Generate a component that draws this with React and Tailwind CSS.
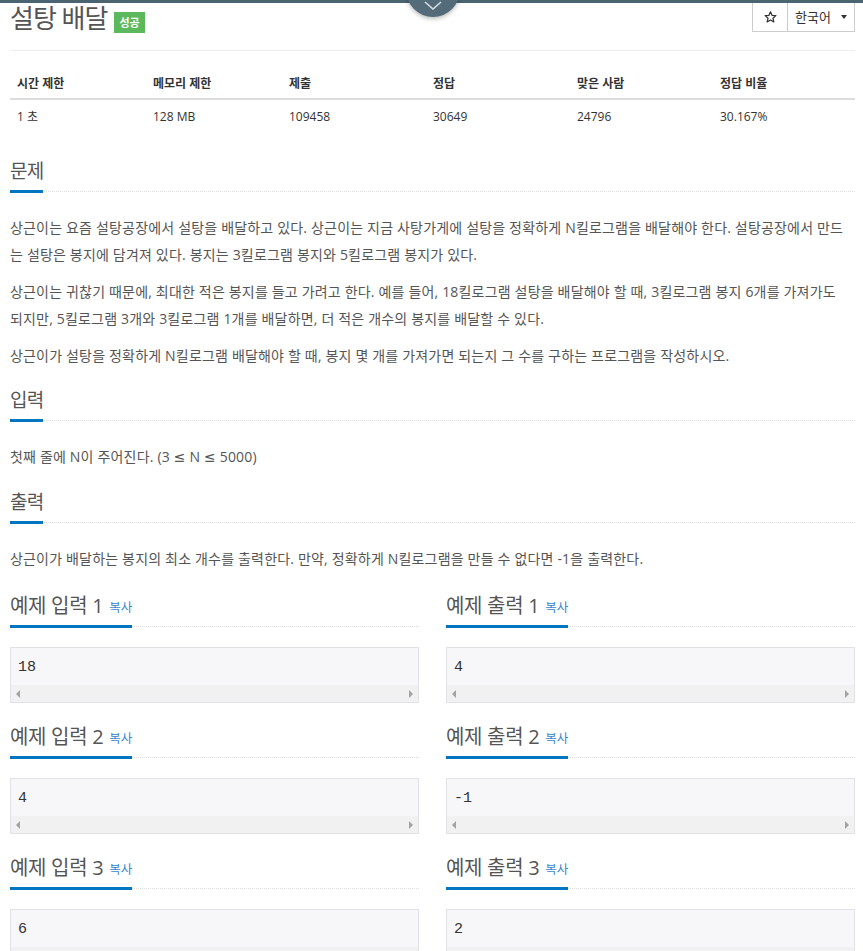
import React from "react";

const FONT = { fontFamily: '"Open Sans", "Noto Sans CJK KR", sans-serif' };

function SectionHead({ children }) {
  return (
    <div className="flex h-[36px] border-b border-dotted border-[#ddd]">
      <h2 className="-mb-[2px] h-[37px] overflow-hidden border-b-[3px] border-[#0076c0] text-[19px] leading-[30px] font-normal text-[#555] tracking-[-0.8px]">
        {children}
      </h2>
    </div>
  );
}

function SampleHead({ title }) {
  return (
    <div className="flex h-[36px] border-b border-dotted border-[#ddd]">
      <h2 className="-mb-[2px] flex h-[37px] items-start border-b-[3px] border-[#0076c0] text-[20px] leading-[30px] font-normal text-[#555] tracking-[-0.3px]">
        {title}
        <span className="ml-[6px] mt-[2px] text-[12.5px] text-[#3a87cf] tracking-normal">복사</span>
      </h2>
    </div>
  );
}

function Pre({ value }) {
  return (
    <div className="mt-[20px] flex h-[56px] flex-col border border-[#e1e1e8] bg-[#f7f7f9]">
      <div
        className="h-[37px] px-[7px] pt-[10px] text-[15px] leading-[20px] text-[#333]"
        style={{ fontFamily: '"Liberation Mono", monospace' }}
      >
        {value}
      </div>
      <div className="flex h-[17px] items-center justify-between bg-[#f1f1f1] px-[5px]">
        <div className="h-0 w-0 border-y-[4px] border-r-[4px] border-y-transparent border-r-[#a3a3a3]" />
        <div className="h-0 w-0 border-y-[4px] border-l-[4px] border-y-transparent border-l-[#a3a3a3]" />
      </div>
    </div>
  );
}

function Sample({ title, value, first }) {
  return (
    <div className={first ? "" : "mt-[19px]"}>
      <SampleHead title={title} />
      <Pre value={value} />
    </div>
  );
}

function Para({ children }) {
  return <p className="text-[14px] leading-[27px] text-[#555] tracking-[0.18px]">{children}</p>;
}

function Le() {
  return <span style={{ fontFamily: '"DejaVu Sans", sans-serif' }}>≤</span>;
}

const cols = ["w-[136px]", "w-[136px]", "w-[144px]", "w-[144px]", "w-[143px]", "w-[142px]"];
const heads = ["시간 제한", "메모리 제한", "제출", "정답", "맞은 사람", "정답 비율"];
const vals = ["1 초", "128 MB", "109458", "30649", "24796", "30.167%"];

export default function App() {
  return (
    <div className="relative h-[951px] w-[863px] overflow-hidden bg-white" style={FONT}>
      {/* top bar */}
      <div className="absolute left-0 top-0 h-[3px] w-full bg-[#4b6472]" />
      <div className="absolute left-[406px] top-[-37px] flex h-[54px] w-[54px] items-end justify-center rounded-full bg-[#546c79] pb-[7px] shadow-[0_2px_4px_rgba(0,0,0,0.25)]">
        <svg width="18" height="9" viewBox="0 0 18 9" fill="none">
          <path d="M1 1 L9 8 L17 1" stroke="#d5dde1" strokeWidth="1.6" />
        </svg>
      </div>

      <div className="pl-[10px] pr-[8px]">
        {/* header */}
        <div className="flex h-[51px] justify-between border-b border-[#eee]">
          <div className="mt-[3px] flex h-[30px] items-start">
            <h1 className="text-[26px] leading-[30px] font-normal text-[#555] tracking-[-1px]">설탕 배달</h1>
            <span className="ml-[7px] mt-[9px] flex h-[21px] items-center bg-[#5cb85c] px-[5px] text-[11px] leading-[21px] font-bold text-white">
              성공
            </span>
          </div>
          <div className="mt-[2px] flex h-[30px] self-start border border-[#ccc] text-[13px] text-[#333]">
            <div className="flex w-[35px] items-center justify-center border-r border-[#ccc]">
              <svg width="13" height="12" viewBox="0 0 24 23" fill="none">
                <path
                  d="M12 1.5 L14.9 8.3 L22.3 8.9 L16.7 13.8 L18.4 21 L12 17.2 L5.6 21 L7.3 13.8 L1.7 8.9 L9.1 8.3 Z"
                  stroke="#333"
                  strokeWidth="2.4"
                  strokeLinejoin="round"
                />
              </svg>
            </div>
            <div className="flex w-[66px] items-center pl-[7px] leading-[20px]">
              한국어
              <span className="ml-[10px] h-0 w-0 border-x-[3.5px] border-t-[4px] border-x-transparent border-t-[#333]" />
            </div>
          </div>
        </div>

        {/* table */}
        <div className="mt-[19px] text-[12px] text-[#333]">
          <div className="flex h-[30px] border-b-2 border-[#ddd] font-bold">
            {heads.map((h, i) => (
              <div key={h} className={`${cols[i]} flex h-[28px] items-center px-[7px] leading-[20px]`}>
                {h}
              </div>
            ))}
          </div>
          <div className="flex h-[34px]">
            {vals.map((v, i) => (
              <div key={v} className={`${cols[i]} flex h-[34px] items-center px-[7px] leading-[20px]`}>
                {v}
              </div>
            ))}
          </div>
        </div>

        {/* 문제 */}
        <div className="mt-[22px] flex flex-col">
          <SectionHead>문제</SectionHead>
          <div className="mt-[22px] flex flex-col gap-[10px]">
            <Para>
              상근이는 요즘 설탕공장에서 설탕을 배달하고 있다. 상근이는 지금 사탕가게에 설탕을 정확하게 N킬로그램을 배달해야 한다. 설탕공장에서 만드는 설탕은 봉지에 담겨져 있다. 봉지는 3킬로그램 봉지와 5킬로그램 봉지가 있다.
            </Para>
            <Para>
              상근이는 귀찮기 때문에, 최대한 적은 봉지를 들고 가려고 한다. 예를 들어, 18킬로그램 설탕을 배달해야 할 때, 3킬로그램 봉지 6개를 가져가도{" "}
              <span className="whitespace-nowrap">되지만,</span> 5킬로그램 3개와 3킬로그램 1개를 배달하면, 더 적은 개수의 봉지를 배달할 수 있다.
            </Para>
            <Para>상근이가 설탕을 정확하게 N킬로그램 배달해야 할 때, 봉지 몇 개를 가져가면 되는지 그 수를 구하는 프로그램을 작성하시오.</Para>
          </div>
        </div>

        {/* 입력 */}
        <div className="mt-[16px] flex flex-col">
          <SectionHead>입력</SectionHead>
          <div className="mt-[22px]">
            <Para>
              첫째 줄에 N이 주어진다. (3 <Le /> N <Le /> 5000)
            </Para>
          </div>
        </div>

        {/* 출력 */}
        <div className="mt-[16px] flex flex-col">
          <SectionHead>출력</SectionHead>
          <div className="mt-[22px]">
            <Para>상근이가 배달하는 봉지의 최소 개수를 출력한다. 만약, 정확하게 N킬로그램을 만들 수 없다면 -1을 출력한다.</Para>
          </div>
        </div>

        {/* samples */}
        <div className="mt-[19px] grid grid-cols-[409px_409px] gap-x-[27px]">
          <div className="flex flex-col">
            <Sample first title="예제 입력 1" value="18" />
            <Sample title="예제 입력 2" value="4" />
            <Sample title="예제 입력 3" value="6" />
          </div>
          <div className="flex flex-col">
            <Sample first title="예제 출력 1" value="4" />
            <Sample title="예제 출력 2" value="-1" />
            <Sample title="예제 출력 3" value="2" />
          </div>
        </div>
      </div>
    </div>
  );
}
